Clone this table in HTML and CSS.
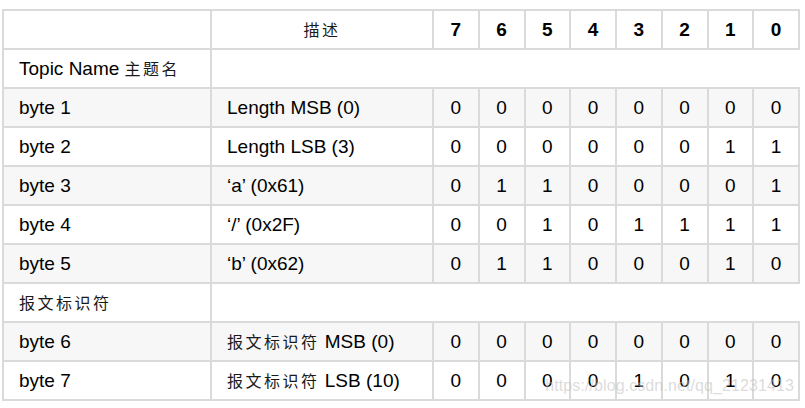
FILE: index.html
```html
<!DOCTYPE html>
<html lang="zh">
<head>
<meta charset="utf-8">
<title>MQTT Topic Name</title>
<link rel="stylesheet" href="styles.css">
</head>
<body>
<div class="wrap">
  <table class="bits">
    <colgroup>
      <col class="c-name">
      <col class="c-desc">
      <col class="c-bit"><col class="c-bit"><col class="c-bit"><col class="c-bit">
      <col class="c-bit"><col class="c-bit"><col class="c-bit"><col class="c-bit">
    </colgroup>
    <tr class="head">
      <td></td>
      <td class="center"><span class="zh">描述</span></td>
      <td class="bit">7</td><td class="bit">6</td><td class="bit">5</td><td class="bit">4</td>
      <td class="bit">3</td><td class="bit">2</td><td class="bit">1</td><td class="bit">0</td>
    </tr>
    <tr>
      <td class="txt">Topic Name <span class="zh">主题名</span></td>
      <td class="span" colspan="9"></td>
    </tr>
    <tr class="alt">
      <td class="txt">byte 1</td><td class="txt">Length MSB (0)</td>
      <td class="bit">0</td><td class="bit">0</td><td class="bit">0</td><td class="bit">0</td>
      <td class="bit">0</td><td class="bit">0</td><td class="bit">0</td><td class="bit">0</td>
    </tr>
    <tr>
      <td class="txt">byte 2</td><td class="txt">Length LSB (3)</td>
      <td class="bit">0</td><td class="bit">0</td><td class="bit">0</td><td class="bit">0</td>
      <td class="bit">0</td><td class="bit">0</td><td class="bit">1</td><td class="bit">1</td>
    </tr>
    <tr class="alt">
      <td class="txt">byte 3</td><td class="txt">‘a’ (0x61)</td>
      <td class="bit">0</td><td class="bit">1</td><td class="bit">1</td><td class="bit">0</td>
      <td class="bit">0</td><td class="bit">0</td><td class="bit">0</td><td class="bit">1</td>
    </tr>
    <tr>
      <td class="txt">byte 4</td><td class="txt">‘/’ (0x2F)</td>
      <td class="bit">0</td><td class="bit">0</td><td class="bit">1</td><td class="bit">0</td>
      <td class="bit">1</td><td class="bit">1</td><td class="bit">1</td><td class="bit">1</td>
    </tr>
    <tr class="alt">
      <td class="txt">byte 5</td><td class="txt">‘b’ (0x62)</td>
      <td class="bit">0</td><td class="bit">1</td><td class="bit">1</td><td class="bit">0</td>
      <td class="bit">0</td><td class="bit">0</td><td class="bit">1</td><td class="bit">0</td>
    </tr>
    <tr>
      <td class="txt"><span class="zh">报文标识符</span></td>
      <td class="span" colspan="9"></td>
    </tr>
    <tr class="alt">
      <td class="txt">byte 6</td><td class="txt"><span class="zh">报文标识符</span> MSB (0)</td>
      <td class="bit">0</td><td class="bit">0</td><td class="bit">0</td><td class="bit">0</td>
      <td class="bit">0</td><td class="bit">0</td><td class="bit">0</td><td class="bit">0</td>
    </tr>
    <tr>
      <td class="txt">byte 7</td><td class="txt"><span class="zh">报文标识符</span> LSB (10)</td>
      <td class="bit">0</td><td class="bit">0</td><td class="bit">0</td><td class="bit">0</td>
      <td class="bit">1</td><td class="bit">0</td><td class="bit">1</td><td class="bit">0</td>
    </tr>
  </table>
  <div class="watermark">https://blog.csdn.net/qq_21231413</div>
</div>
</body>
</html>
```

FILE: styles.css
```css
html, body {
  margin: 0;
  padding: 0;
  background: #ffffff;
}

body {
  padding: 9px 0 0 2px;
  font-family: "Liberation Sans", Arial, "Noto Sans CJK SC", sans-serif;
  font-size: 19px;
  color: #000;
}

.wrap {
  position: relative;
  width: 798px;
}

.bits {
  width: 798px;
  table-layout: fixed;
  border-collapse: collapse;
  border: 2px solid #dadada;
}

.c-name { width: 208px; }
.c-desc { width: 222px; }
.c-bit { width: 45.75px; }

.bits tr {
  height: 39px;
}

.bits td {
  border: 2px solid #dadada;
  padding: 0 0 0 15px;
  vertical-align: middle;
  white-space: nowrap;
  line-height: 22px;
}

.bits tr.alt td {
  background: #f7f7f7;
}

.bits td.bit,
.bits td.center {
  padding: 0;
  text-align: center;
}

.head td.bit {
  font-weight: bold;
}

.bits td.span {
  border-right-color: #ffffff;
}

.zh {
  font-family: "Noto Sans CJK SC", sans-serif;
  font-size: 16px;
  letter-spacing: 2.5px;
  color: #1a1a1a;
}

.watermark {
  position: absolute;
  right: 6px;
  bottom: 6px;
  font-family: "Liberation Sans", Arial, sans-serif;
  font-size: 16px;
  color: rgba(190, 190, 190, 0.55);
  letter-spacing: 0.1px;
  pointer-events: none;
}
```
